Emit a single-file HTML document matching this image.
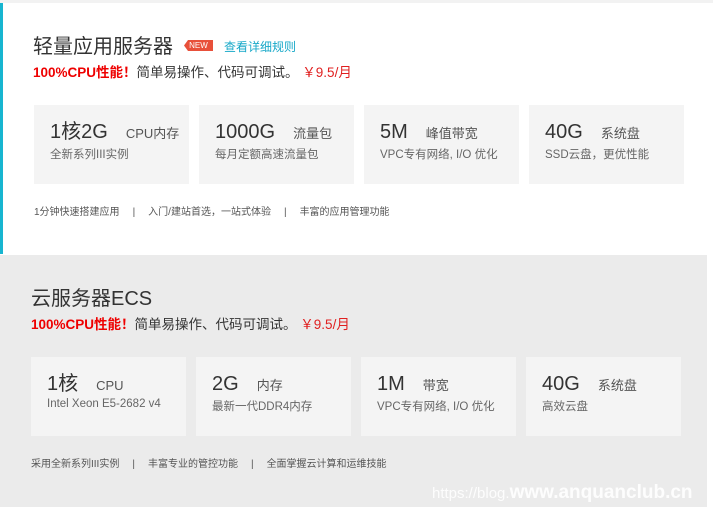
<!DOCTYPE html>
<html><head><meta charset="utf-8"><style>
*{margin:0;padding:0;box-sizing:border-box}
body{width:713px;height:513px;background:#fff;position:relative;overflow:hidden;font-family:"Liberation Sans","Noto Sans CJK SC",sans-serif;color:#333}
.top{position:absolute;left:0;top:0;width:713px;height:3px;background:#f2f2f2}
.bar{position:absolute;left:0;top:3px;width:3px;height:251px;background:#17b5d0}
.gray{position:absolute;left:0;top:255px;width:707px;height:252px;background:#ebebeb}
.abs{position:absolute;white-space:nowrap}
.t{font-size:20px;color:#333;line-height:24px}
.r{font-size:13.5px;color:#333;line-height:18px}
.r b{color:#e00;font-weight:bold}
.r i{font-style:normal;color:#e02020}
.card{position:absolute;width:155px;height:79px;background:#f4f4f4}
.card .a{position:absolute;left:16px;top:15px;font-size:20px;line-height:24px;color:#333;white-space:nowrap}
.card .a span{font-size:13px;color:#555;margin-left:18px;line-height:24px}
.card .b{position:absolute;left:16px;top:41px;font-size:11.5px;color:#666;white-space:nowrap}
.f{font-size:10px;color:#555}
.f s{text-decoration:none;margin:0 13px}
</style></head><body>
<div class="top"></div><div class="bar"></div>
<div class="abs t" style="left:33px;top:35px">轻量应用服务器</div>
<div class="abs" style="left:184px;top:40px;width:29px;height:11px;background:#e8503a;color:#fff;font-size:8px;line-height:11px;text-align:center;clip-path:polygon(4px 0,100% 0,100% 100%,4px 100%,0 50%)">NEW</div>
<div class="abs" style="left:224px;top:38px;font-size:12px;color:#17a8c8">查看详细规则</div>
<div class="abs r" style="left:33px;top:64px"><b>100%CPU性能！</b>简单易操作、代码可调试。 <i>￥9.5/月</i></div>
<div class="card" style="left:34px;top:105px"><div class="a">1核2G<span>CPU内存</span></div><div class="b">全新系列III实例</div></div>
<div class="card" style="left:199px;top:105px"><div class="a">1000G<span>流量包</span></div><div class="b">每月定额高速流量包</div></div>
<div class="card" style="left:364px;top:105px"><div class="a">5M<span>峰值带宽</span></div><div class="b">VPC专有网络, I/O 优化</div></div>
<div class="card" style="left:529px;top:105px"><div class="a">40G<span>系统盘</span></div><div class="b">SSD云盘，更优性能</div></div>
<div class="abs f" style="left:34px;top:203px">1分钟快速搭建应用<s>|</s>入门/建站首选，一站式体验<s>|</s>丰富的应用管理功能</div>
<div class="gray"></div>
<div class="abs t" style="left:31px;top:287px">云服务器ECS</div>
<div class="abs r" style="left:31px;top:316px"><b>100%CPU性能！</b>简单易操作、代码可调试。 <i>￥9.5/月</i></div>
<div class="card" style="left:31px;top:357px"><div class="a">1核<span>CPU</span></div><div class="b">Intel Xeon E5-2682 v4</div></div>
<div class="card" style="left:196px;top:357px"><div class="a">2G<span>内存</span></div><div class="b">最新一代DDR4内存</div></div>
<div class="card" style="left:361px;top:357px"><div class="a">1M<span>带宽</span></div><div class="b">VPC专有网络, I/O 优化</div></div>
<div class="card" style="left:526px;top:357px"><div class="a">40G<span>系统盘</span></div><div class="b">高效云盘</div></div>
<div class="abs f" style="left:31px;top:455px">采用全新系列III实例<s>|</s>丰富专业的管控功能<s>|</s>全面掌握云计算和运维技能</div>
<div class="abs" style="left:432px;top:482px;font-size:15px;color:#fff;opacity:.9">https://blog.<b style="font-size:19px">www.anquanclub.cn</b></div>
</body></html>
